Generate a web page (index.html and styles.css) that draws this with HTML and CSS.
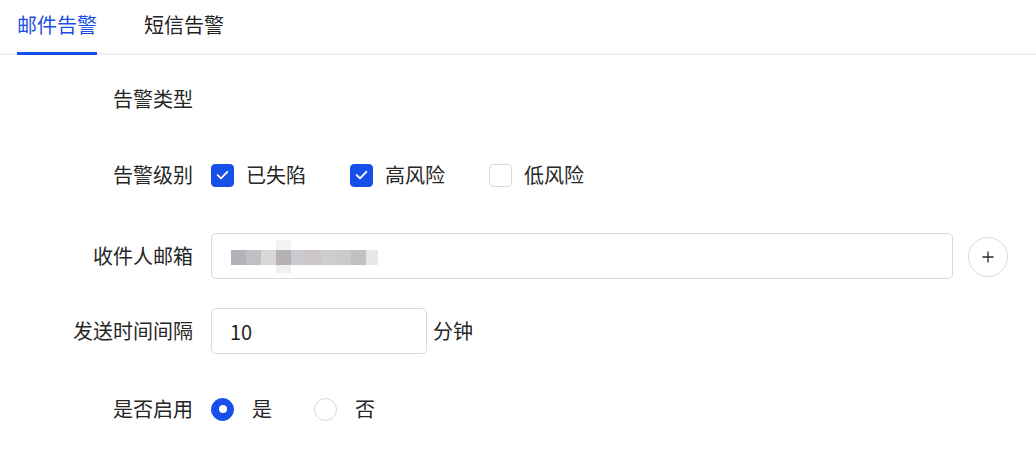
FILE: index.html
```html
<!DOCTYPE html>
<html lang="zh-CN">
<head>
<meta charset="utf-8">
<title>告警设置</title>
<link rel="stylesheet" href="styles.css">
</head>
<body>
<div class="tabs">
  <div class="tab active">邮件告警</div>
  <div class="tab">短信告警</div>
</div>
<div class="form">
  <div class="row r1">
    <div class="label">告警类型</div>
  </div>
  <div class="row r2">
    <div class="label">告警级别</div>
    <div class="controls">
      <label class="check"><span class="box on"><svg viewBox="0 0 24 24" width="24" height="24"><path d="M6.5 12.2l3.8 3.6 7.2-7.4" fill="none" stroke="#fff" stroke-width="2.2" stroke-linecap="round" stroke-linejoin="round"/></svg></span><span class="ctext">已失陷</span></label>
      <label class="check"><span class="box on"><svg viewBox="0 0 24 24" width="24" height="24"><path d="M6.5 12.2l3.8 3.6 7.2-7.4" fill="none" stroke="#fff" stroke-width="2.2" stroke-linecap="round" stroke-linejoin="round"/></svg></span><span class="ctext">高风险</span></label>
      <label class="check"><span class="box"></span><span class="ctext">低风险</span></label>
    </div>
  </div>
  <div class="row r3">
    <div class="label">收件人邮箱</div>
    <div class="field email">
      <div class="pix">
        <span class="px p1"></span><span class="px p2"></span><span class="px p3"></span><span class="px p4"></span><span class="px p5"></span><span class="px p6"></span><span class="px p7"></span><span class="px p8"></span><span class="px p9"></span><span class="px p10"></span>
      </div>
    </div>
    <div class="add"><svg viewBox="0 0 14 14" width="14" height="14"><path d="M7 1.5v11M1.5 7h11" stroke="#2b2b2b" stroke-width="1.3" fill="none"/></svg></div>
  </div>
  <div class="row r4">
    <div class="label">发送时间间隔</div>
    <div class="field interval">10</div>
    <div class="unit">分钟</div>
  </div>
  <div class="row r5">
    <div class="label">是否启用</div>
    <div class="controls">
      <label class="radio"><span class="dot on"></span><span class="rtext">是</span></label>
      <label class="radio"><span class="dot"></span><span class="rtext">否</span></label>
    </div>
  </div>
</div>
</body>
</html>
```
FILE: styles.css
```css
* { box-sizing: border-box; }
body {
  margin: 0;
  background: #fff;
  font-family: "Noto Sans CJK SC", "Noto Sans", sans-serif;
  color: #262626;
  font-size: 20px;
}
.tabs {
  display: flex;
  gap: 47px;
  height: 55px;
  padding-left: 17px;
  border-bottom: 2px solid #f0f0f2;
}
.tab {
  height: 55px;
  margin-bottom: -2px;
  padding-top: 11px;
  line-height: 28px;
  font-size: 20px;
  color: #222;
  border-bottom: 3px solid transparent;
}
.tab.active {
  color: #1a4fe3;
  border-bottom-color: #1250ea;
}
.form {
  display: flex;
  flex-direction: column;
  padding-right: 28px;
}
.row {
  display: flex;
  align-items: center;
  height: 46px;
}
.r1 { margin-top: 21px; }
.r2 { margin-top: 30px; }
.r3 { margin-top: 35px; }
.r4 { margin-top: 29px; }
.r5 { margin-top: 32px; }
.label {
  width: 193px;
  flex: none;
  text-align: right;
  margin-right: 18px;
  line-height: 28px;
  color: #262626;
}
.controls {
  display: flex;
  align-items: center;
}
.check {
  display: flex;
  align-items: center;
  margin-right: 44px;
}
.box {
  width: 23px;
  height: 23px;
  border: 1px solid #d8d8de;
  border-radius: 4px;
  background: #fff;
  display: flex;
  align-items: center;
  justify-content: center;
  margin-right: 12px;
}
.box.on {
  background: #1650e8;
  border-color: #1650e8;
}
.box svg { width: 22px; height: 22px; }
.ctext { line-height: 28px; }
.field {
  height: 46px;
  border: 1px solid #d8d8de;
  border-radius: 5px;
  display: flex;
  align-items: center;
}
.email {
  flex: 1;
  padding-left: 19px;
}
.pix {
  display: flex;
  align-items: center;
  margin-top: 2px;
}
.px { width: 15px; height: 15px; display: block; }
.p1 { background: #b4b2b9; }
.p2 { background: #c1bfc3; }
.p3 { background: #d7d6d9; }
.p4 { background: linear-gradient(#f3f3f3 0 10px, #b6b1b4 10px 25px, #f1f0f1 25px); height: 33px; margin-top: -2px; }
.p5 { background: #cbc9cd; }
.p6 { background: #cbc6c7; }
.p7 { background: #cecdce; }
.p8 { background: #cac9cb; }
.p9 { background: #c1c1c3; }
.p10 { background: #e8e7e8; width: 12px; }
.add {
  flex: none;
  width: 40px;
  height: 40px;
  margin-left: 15px;
  border: 1px solid #d9d9df;
  border-radius: 50%;
  display: flex;
  align-items: center;
  justify-content: center;
  margin-top: 2px;
}
.interval {
  width: 216px;
  padding-left: 18px;
  color: #1f1f1f;
}
.unit {
  margin-left: 6px;
  line-height: 28px;
}
.radio {
  display: flex;
  align-items: center;
  margin-right: 42px;
}
.dot {
  width: 23px;
  height: 23px;
  border-radius: 50%;
  border: 1px solid #d8d8de;
  background: #fff;
  margin-right: 18px;
  display: flex;
  align-items: center;
  justify-content: center;
}
.dot.on {
  background: #1650e8;
  border-color: #1650e8;
}
.dot.on::after {
  content: "";
  width: 8px;
  height: 8px;
  border-radius: 50%;
  background: #fff;
}
.rtext { line-height: 28px; }
```
